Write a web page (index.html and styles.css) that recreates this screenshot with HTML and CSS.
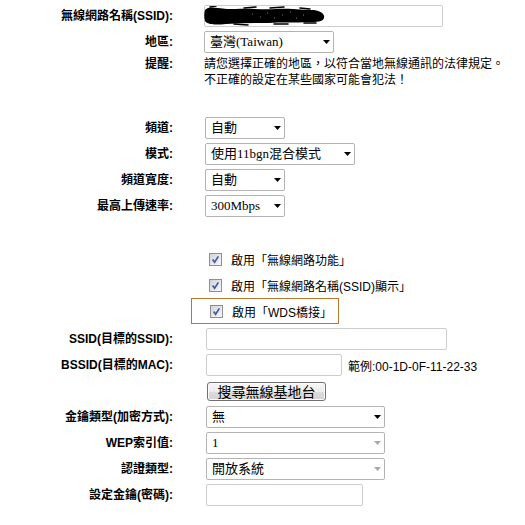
FILE: index.html
```html
<!DOCTYPE html>
<html lang="zh-Hant">
<head>
<meta charset="utf-8">
<title>無線網路設定</title>
<link rel="stylesheet" href="styles.css">
</head>
<body>
<div class="page">
  <div class="row g1">
    <div class="label">無線網路名稱(SSID):</div>
    <div class="field">
      <div class="input w239">
        <svg class="scribble" width="122" height="20" viewBox="0 0 122 20">
          <path d="M1 4 C3 1 9 1 14 2 C20 3 26 3 32 3 C45 2 58 4 72 3 C86 2 100 4 110 4 C117 5 121 8 120 12 C119 16 113 16 104 16 C92 17 78 16 64 17 C50 17 36 17 22 18 C12 19 4 19 1 15 C0 11 0 7 1 4 Z" fill="#000"/>
          <path d="M6 1 L12 0 M40 2 L52 1 M66 2 L80 1 M96 2 L106 3 M30 18 L44 19 M70 18 L84 18 M100 17 L112 17" stroke="#000" stroke-width="1.6" stroke-linecap="round"/>
          <path d="M48 8 h1 M56 11 h1 M63 7 h1 M70 12 h1 M78 9 h1 M86 6 h1 M92 12 h1 M99 9 h1" stroke="#777" stroke-width="1"/>
        </svg>
      </div>
    </div>
  </div>
  <div class="row g1">
    <div class="label">地區:</div>
    <div class="field">
      <div class="select w130"><span>臺灣(Taiwan)</span><svg class="arrow" width="7" height="4" viewBox="0 0 7 4"><path d="M0 0H7L3.5 4Z" fill="#000"/></svg></div>
    </div>
  </div>
  <div class="note g1">
    <div class="label nl">提醒:</div>
    <div class="note-text">請您選擇正確的地區，以符合當地無線通訊的法律規定。<br>不正確的設定在某些國家可能會犯法！</div>
  </div>

  <div class="row g2">
    <div class="label">頻道:</div>
    <div class="field">
      <div class="select w80"><span>自動</span><svg class="arrow" width="7" height="4" viewBox="0 0 7 4"><path d="M0 0H7L3.5 4Z" fill="#000"/></svg></div>
    </div>
  </div>
  <div class="row g2">
    <div class="label">模式:</div>
    <div class="field">
      <div class="select w150"><span>使用11bgn混合模式</span><svg class="arrow" width="7" height="4" viewBox="0 0 7 4"><path d="M0 0H7L3.5 4Z" fill="#000"/></svg></div>
    </div>
  </div>
  <div class="row g2">
    <div class="label">頻道寬度:</div>
    <div class="field">
      <div class="select w80"><span>自動</span><svg class="arrow" width="7" height="4" viewBox="0 0 7 4"><path d="M0 0H7L3.5 4Z" fill="#000"/></svg></div>
    </div>
  </div>
  <div class="row g2">
    <div class="label">最高上傳速率:</div>
    <div class="field">
      <div class="select w80"><span>300Mbps</span><svg class="arrow" width="7" height="4" viewBox="0 0 7 4"><path d="M0 0H7L3.5 4Z" fill="#000"/></svg></div>
    </div>
  </div>

  <div class="checks">
    <div class="row g1">
      <div class="label"></div>
      <div class="cb">
        <svg class="cbx" width="13" height="13" viewBox="0 0 13 13"><defs><linearGradient id="c1" x1="0" y1="0" x2="1" y2="1"><stop offset="0" stop-color="#cfd2d6"/><stop offset="1" stop-color="#fafafa"/></linearGradient></defs><rect x="0.5" y="0.5" width="12" height="12" fill="url(#c1)" stroke="#8e8f90"/><path d="M3.6 6.4 L5.6 9.2 L9.4 3.4" stroke="#3e5ca6" stroke-width="1.7" fill="none"/></svg>
        <span>啟用「無線網路功能」</span>
      </div>
    </div>
    <div class="row g1">
      <div class="label"></div>
      <div class="cb">
        <svg class="cbx" width="13" height="13" viewBox="0 0 13 13"><defs><linearGradient id="c2" x1="0" y1="0" x2="1" y2="1"><stop offset="0" stop-color="#cfd2d6"/><stop offset="1" stop-color="#fafafa"/></linearGradient></defs><rect x="0.5" y="0.5" width="12" height="12" fill="url(#c2)" stroke="#8e8f90"/><path d="M3.6 6.4 L5.6 9.2 L9.4 3.4" stroke="#3e5ca6" stroke-width="1.7" fill="none"/></svg>
        <span>啟用「無線網路名稱(SSID)顯示」</span>
      </div>
    </div>
    <div class="row g1">
      <div class="label"></div>
      <div class="hl">
        <svg class="cbx" width="13" height="13" viewBox="0 0 13 13"><defs><linearGradient id="c3" x1="0" y1="0" x2="1" y2="1"><stop offset="0" stop-color="#cfd2d6"/><stop offset="1" stop-color="#fafafa"/></linearGradient></defs><rect x="0.5" y="0.5" width="12" height="12" fill="url(#c3)" stroke="#8e8f90"/><path d="M3.6 6.4 L5.6 9.2 L9.4 3.4" stroke="#3e5ca6" stroke-width="1.7" fill="none"/></svg>
        <span>啟用「WDS橋接」</span>
      </div>
    </div>
  </div>

  <div class="lower">
    <div class="row g3">
      <div class="label">SSID(目標的SSID):</div>
      <div class="field"><div class="input w241"></div></div>
    </div>
    <div class="row g3">
      <div class="label">BSSID(目標的MAC):</div>
      <div class="field inline">
        <div class="input w136"></div>
        <span class="hint">範例:00-1D-0F-11-22-33</span>
      </div>
    </div>
    <div class="row g3">
      <div class="label"></div>
      <div class="field"><button class="btn" type="button">搜尋無線基地台</button></div>
    </div>
    <div class="row g3">
      <div class="label">金鑰類型(加密方式):</div>
      <div class="field">
        <div class="select w179"><span>無</span><svg class="arrow" width="7" height="4" viewBox="0 0 7 4"><path d="M0 0H7L3.5 4Z" fill="#000"/></svg></div>
      </div>
    </div>
    <div class="row g3">
      <div class="label">WEP索引值:</div>
      <div class="field">
        <div class="select w179"><span>1</span><svg class="arrow" width="7" height="4" viewBox="0 0 7 4"><path d="M0 0H7L3.5 4Z" fill="#a9a9a9"/></svg></div>
      </div>
    </div>
    <div class="row g3">
      <div class="label">認證類型:</div>
      <div class="field">
        <div class="select w179"><span>開放系統</span><svg class="arrow" width="7" height="4" viewBox="0 0 7 4"><path d="M0 0H7L3.5 4Z" fill="#a9a9a9"/></svg></div>
      </div>
    </div>
    <div class="row g3">
      <div class="label">設定金鑰(密碼):</div>
      <div class="field"><div class="input w157"></div></div>
    </div>
  </div>
</div>
</body>
</html>
```
FILE: styles.css
```css
* { box-sizing: border-box; }

body {
  margin: 0;
  background: #ffffff;
  color: #000000;
  font-family: "Liberation Sans", "Noto Sans CJK TC", sans-serif;
  font-size: 12px;
}

.page {
  padding-top: 3px;
}

.row {
  display: grid;
  grid-template-columns: 173px 1fr;
  height: 26px;
  align-items: center;
}

.g1 { column-gap: 31px; }
.g2 { column-gap: 32px; }
.g3 { column-gap: 33px; }

.label {
  text-align: right;
  font-weight: bold;
  line-height: 14px;
  white-space: nowrap;
}

.field {
  display: flex;
  align-items: center;
}

.field.inline {
  gap: 6px;
}

.input {
  height: 22px;
  border: 1px solid #cdcdcd;
  border-radius: 2px;
  background: #ffffff;
  display: flex;
  align-items: center;
  overflow: visible;
}

.scribble {
  display: block;
  margin-left: -1px;
  margin-top: 0px;
}

.select {
  height: 22px;
  border: 1px solid #b4b4b4;
  border-radius: 2px;
  background: #ffffff;
  display: flex;
  align-items: center;
  justify-content: space-between;
  padding: 0 3px 0 5px;
  font-family: "Liberation Serif", "Noto Sans CJK TC", serif;
  font-size: 13px;
  line-height: 16px;
  white-space: nowrap;
}

.arrow {
  display: block;
  flex: none;
}

.w80 { width: 80px; }
.w130 { width: 130px; }
.w136 { width: 136px; }
.w150 { width: 150px; }
.w157 { width: 157px; }
.w179 { width: 179px; }
.w239 { width: 239px; }
.w241 { width: 241px; }

.note {
  display: grid;
  grid-template-columns: 173px 1fr;
  padding-top: 1px;
  margin-bottom: 27px;
  line-height: 16px;
}

.label.nl {
  line-height: 16px;
}

.note-text {
  white-space: nowrap;
}

.checks {
  margin-top: 27px;
  margin-bottom: 2px;
}

.cb {
  display: flex;
  align-items: center;
  gap: 9px;
  padding-left: 5px;
  white-space: nowrap;
}

.cbx {
  display: block;
  flex: none;
}

.hl {
  display: flex;
  align-items: center;
  gap: 9px;
  width: 148px;
  height: 26px;
  margin-left: -13px;
  padding-left: 18px;
  border: 1px solid #b7782c;
  white-space: nowrap;
}

.hint {
  white-space: nowrap;
}

.btn {
  width: 119px;
  height: 19px;
  margin-left: 1px;
  padding: 0;
  border: 1px solid #707070;
  border-radius: 3px;
  background: linear-gradient(#f7f7f7 0%, #ececec 50%, #dcdcdc 51%, #d3d3d3 100%);
  box-shadow: inset 0 0 0 1px #fbfbfb;
  font-family: "Noto Sans CJK TC", sans-serif;
  font-size: 14px;
  line-height: 17px;
  color: #000000;
}
```
